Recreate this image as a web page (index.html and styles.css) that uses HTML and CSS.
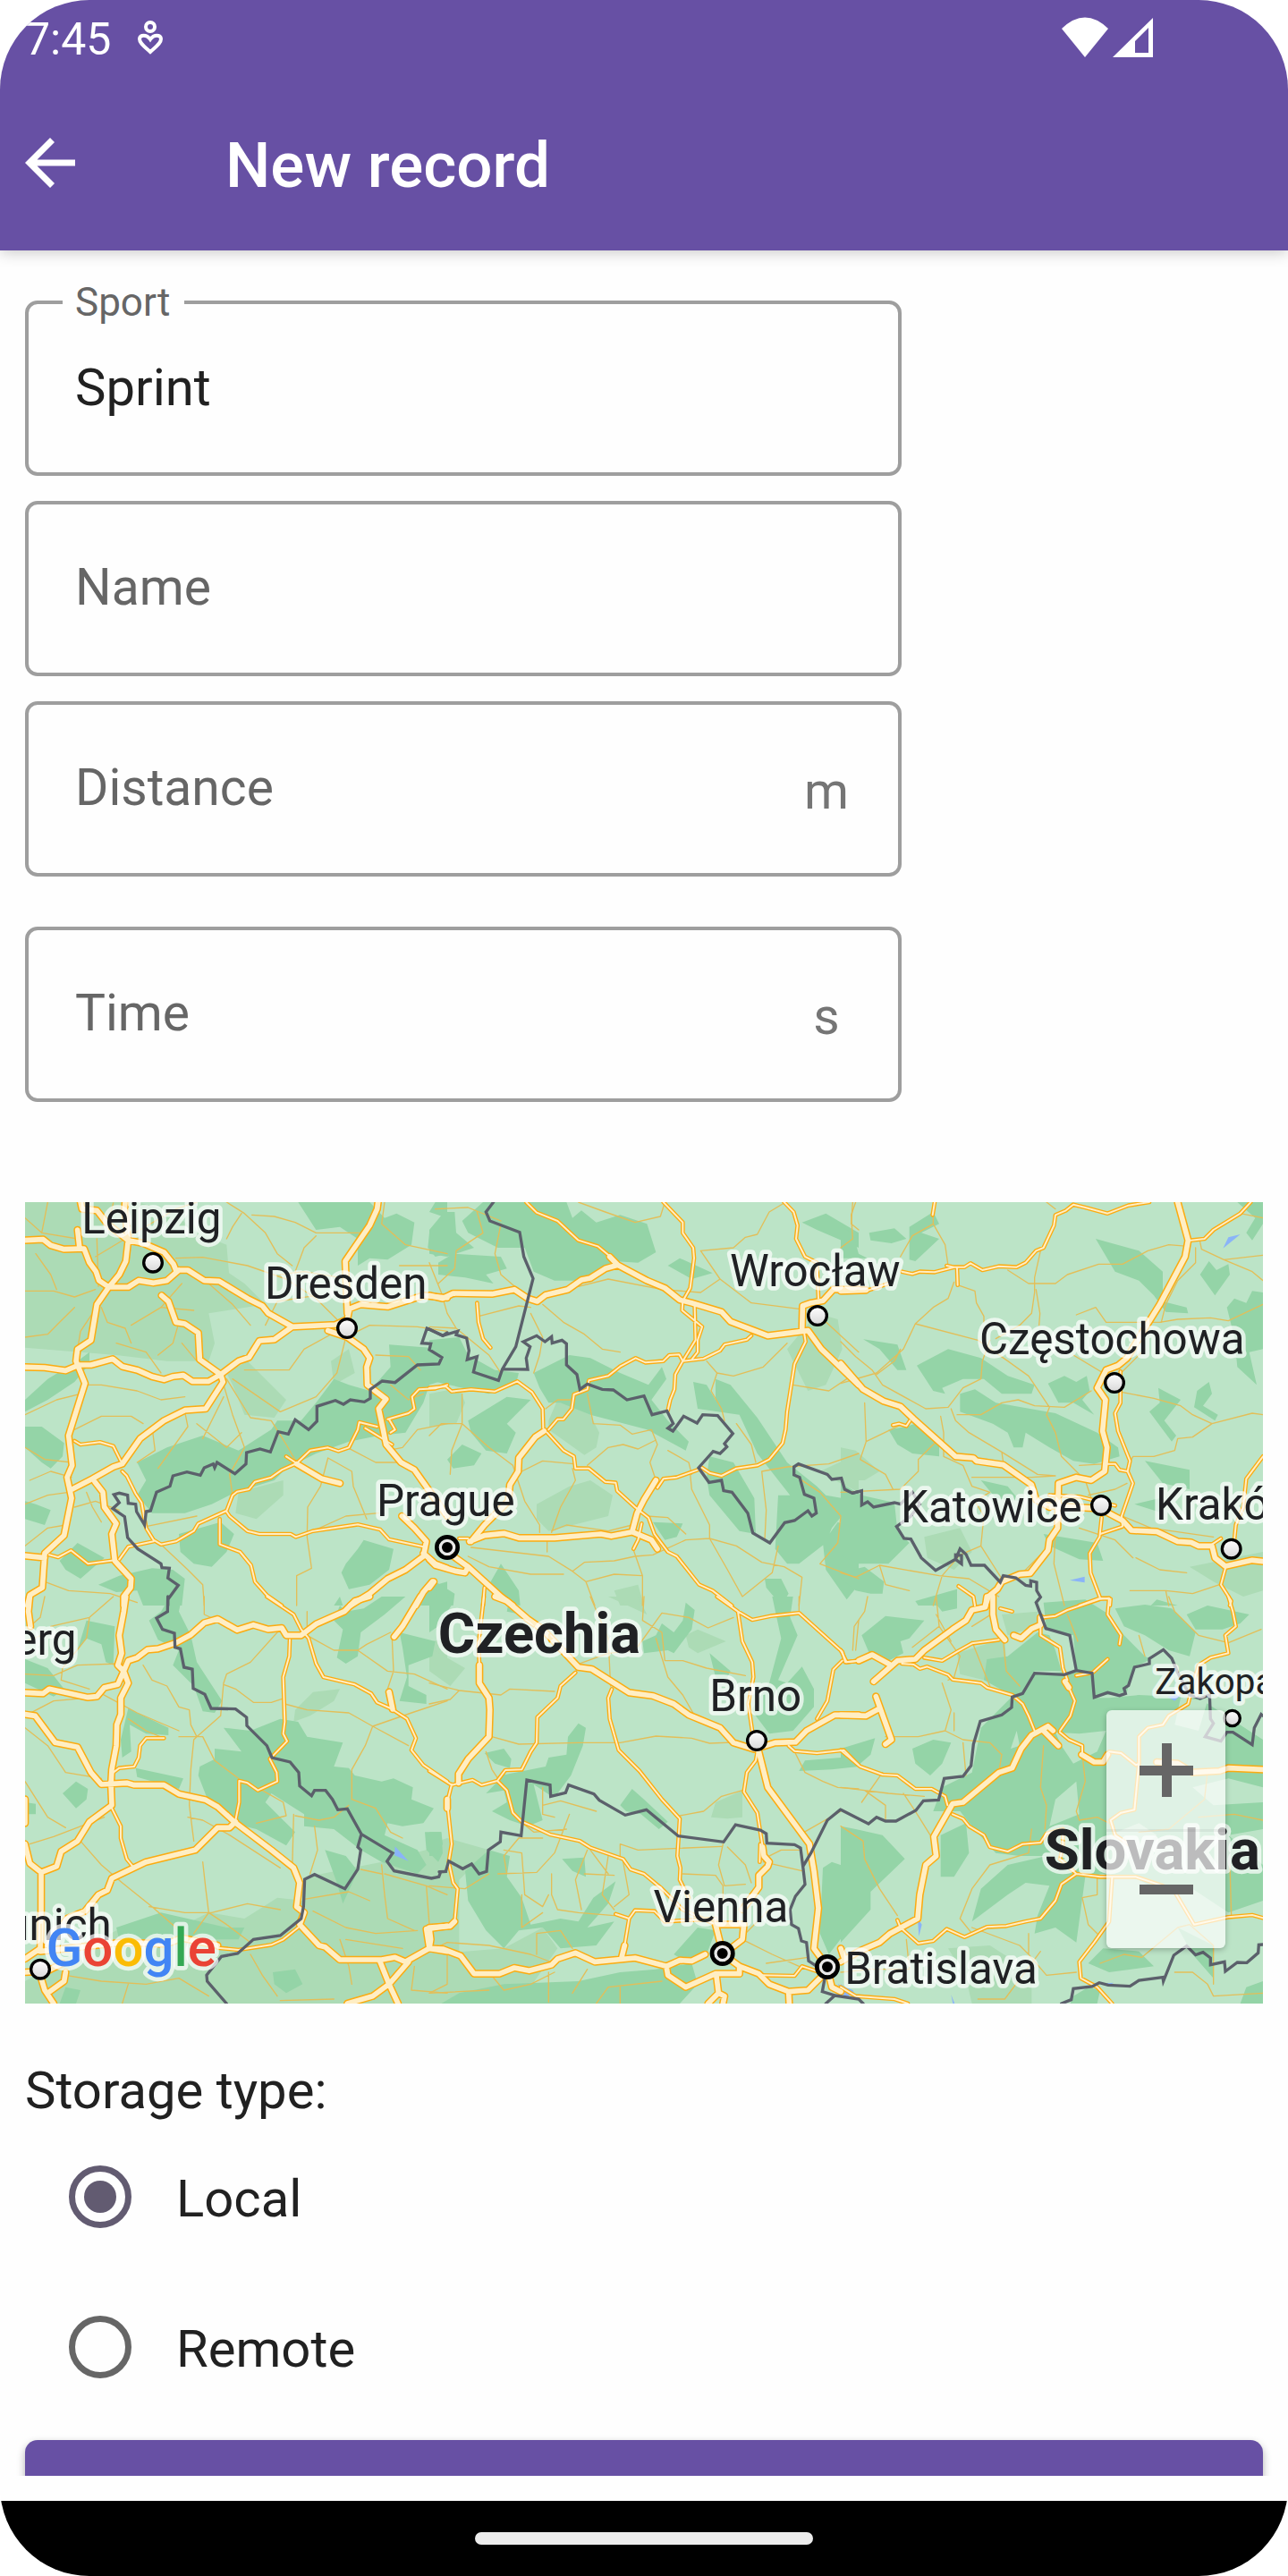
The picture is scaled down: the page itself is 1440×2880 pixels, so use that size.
FILE: index.html
```html
<!DOCTYPE html>
<html lang="en">
<head>
<meta charset="utf-8">
<meta name="viewport" content="width=device-width, initial-scale=1">
<title>New record</title>
<link rel="stylesheet" href="styles.css">
</head>
<body>
<div class="screen">
  <header class="top">
    <div class="status">
      <time class="status__time">7:45</time>
      <svg class="status__heart" viewBox="0 0 28 38" aria-hidden="true"><circle cx="14" cy="7" r="5"/><path d="M14 35C9 30 2 26 2 20.500C2 15.500 10 15 14 21C18 15 26 15.500 26 20.500C26 26 19 30 14 35Z"/></svg>
      <svg class="status__radio" viewBox="0 0 104 46" aria-hidden="true"><path d="M1 13Q27-12 53 13L27 45Z"/><path fill-rule="evenodd" d="M58 45L103 1V45ZM83 27V40H98V12Z"/></svg>
    </div>
    <div class="appbar">
      <button class="appbar__back" type="button" aria-label="Back"><svg viewBox="0 0 56 56" aria-hidden="true"><path d="M56 24.500H13.500L33 5L28 0L0 28L28 56L33 51L13.500 31.500H56Z"/></svg></button>
      <h1 class="appbar__title">New record</h1>
    </div>
  </header>

  <main class="scroll">
    <form class="form">
      <div class="fields">
        <div class="field field--filled">
          <label class="field__label" for="sport">Sport</label>
          <input class="field__input" id="sport" type="text" value="Sprint">
        </div>
        <div class="field">
          <label class="field__label" for="name">Name</label>
          <input class="field__input" id="name" type="text">
        </div>
        <div class="field">
          <label class="field__label" for="distance">Distance</label>
          <input class="field__input" id="distance" type="text">
          <span class="field__unit">m</span>
        </div>
        <div class="field field--spaced">
          <label class="field__label" for="time">Time</label>
          <input class="field__input" id="time" type="text">
          <span class="field__unit">s</span>
        </div>
      </div>

      <div class="map">
        <svg class="map__canvas" viewBox="0 0 4152 2688" role="img" aria-label="Map of Czechia">
          <defs>
            <linearGradient id="dot" x1="0" y1="0" x2="0" y2="1"><stop offset="0" stop-color="#fff"/><stop offset="1" stop-color="#d8d8d8"/></linearGradient>
            <g id="major">
              <path transform="translate(-24 -27)" d="M24 155L85 152 110 172 155 185 222 183 240 230 262 260 272 290 305 312M200 120L207 183M210 27L215 50 265 55 300 100 370 155 420 165 490 195 522 235 530 255 570 255 625 290 675 292 770 350 820 375 840 400 920 445 1065 438 1105 420 1112 385 1150 370 1240 378 1360 340 1440 348M1105 400L1098 225 1180 105 1205 50 1208 27M360 27L358 50 370 155 362 225 340 270 305 312 370 312 405 290 455 298 500 290 540 255M305 312L265 370 245 490 200 520 195 560 225 635 170 810 182 910 165 950 180 1020 155 1145 90 1205 82 1320 40 1345 32 1380M24 580L90 582 160 592 205 573 245 573 318 553 350 578 400 590 450 612 490 622 520 612 555 608 585 628 640 628 680 605M482 340L505 360 530 430 560 435 605 465 610 555 680 605 688 630 630 720 560 725 490 760 410 820 350 905 320 915 250 955 182 990M680 605L740 560 775 548 810 492 860 488 920 445M258 965L285 1000 290 1050 330 1105 315 1140 325 1230 380 1290 378 1320 355 1350 355 1380M24 1213L90 1220M1040 458L1105 480 1160 520 1180 550 1170 580 1172 640 1235 688 1210 720 1225 790 1235 840 1285 900 1330 925 1440 1080M935 905L1020 955 1080 970M1288 1080L1330 1120 1370 1165 1360 1215 1300 1260 1240 1290 1180 1340 1115 1380M1360 1205L1400 1240 1440 1255M1390 1300L1360 1335 1335 1380"/>
              <path transform="translate(1356 -27)" d="M0 340L45 350 80 333 210 335 285 320 330 350 362 360 390 338 465 320 510 288 540 282 590 250 632 238 730 290 790 315 840 355 880 365 980 395 1010 428 1135 475 1270 458M605 210L632 238M1250 455L1252 375 1280 365 1320 358 1355 320 1440 320M1270 458L1315 520 1440 640M385 795L355 815 300 885 298 930 270 975 265 1030 185 1110 140 1165M135 1165L185 1145 250 1138 300 1153 420 1153 575 1140 610 1147 680 1133 745 1160 765 1190M680 1133L697 1070 720 1025 760 960M60 1200L130 1250 240 1350 280 1380M0 1225L20 1245 90 1265 120 1270 130 1250M0 1320L15 1300"/>
              <path transform="translate(2736 -27)" d="M0 325L85 322M0 568L75 655 145 695 200 712 245 755 385 880 445 885 455 895 545 908 640 975 655 1025 700 1050M1130 27L1165 155 1155 210 1070 370 1020 450 960 550 930 575 890 590 860 650 888 690 878 795 893 850 885 930 840 960 790 950 730 970 727 1120 700 1160 695 1195 635 1272 600 1275 540 1300 525 1325 495 1350 485 1380M700 1045L870 1055 945 1095 975 1128 1060 1132 1130 1165 1175 1168 1200 1180 1245 1180 1255 1220 1290 1248 1380 1228 1416 1232"/>
              <path transform="translate(-24 1323)" d="M40 0L35 50 42 100M362 0L355 50 340 130 348 190 335 230 355 250 370 290 345 340 345 395 332 430 330 500 315 580 312 630 315 700 240 755 200 820 145 855 130 905 78 925 40 895 24 830M24 680V760M24 322L85 325 105 310 160 322 235 338 265 335 290 305 335 295 355 250 370 215 400 205 435 178 470 175 530 155 580 128 625 88 670 75 735 112 790 95 840 110 885 105 900 130 950 130 1000 92 1095 50 1130 15 1180 0M24 395L58 400 125 490 200 505 245 590 280 630 365 625 390 632 490 632 540 662 630 682 670 705 725 755 850 850 925 910 945 960 935 1040 960 1060 945 1100 1010 1170 1030 1175 1080 1218 1220 1218 1265 1210 1300 1225 1380 1180 1440 1190M730 755L710 775 670 775 595 850 430 890 315 945 300 985 270 1000 225 1055 165 1080 100 1170M78 925L78 1050 75 1180 24 1215M1262 135L1290 100 1350 0M1245 320L1257 378M1440 1105L1370 1115 1380 1180M1215 1225L1245 1300 1275 1365M1310 1225L1245 1300 1190 1340 1105 1365M75 1190L165 1180 350 1160 500 1165 550 1145 670 1170M24 1260L100 1255 150 1230M75 1270L90 1320 120 1365M160 1260L155 1290 100 1330M1440 680V710"/>
              <path transform="translate(1356 1323)" d="M220 0L260 15 330 75 380 110 500 237 545 243 670 322 750 333 820 360 870 397 975 440 1020 490 1090 512 1160 490 1228 488 1265 450 1360 397 1440 397M168 230L168 290 200 340 203 380 200 470 130 545 98 595 98 625M1105 520L1135 640 1275 830 1290 920 1305 1045 1290 1180 1330 1235M1118 840L1122 870 1140 890 1135 905 1105 935 1105 975 1050 1050M0 1110L70 1105 85 1090M0 1110L5 1150 0 1180 45 1182 105 1205 150 1265 235 1265 285 1245 335 1255 410 1235 430 1215 490 1195 555 1225 690 1212 795 1240 840 1220 880 1222 925 1200M655 1170L645 1210M795 1240L800 1270 860 1310 960 1265 1040 1265 1040 1240 985 1200 960 1100 1055 1100 1050 1150 985 1200M1040 1240L1105 1265 1140 1300 1205 1325 1270 1320 1310 1280M962 1265L970 1330 935 1365M970 1330L990 1340 985 1365M1205 1325L1207 1365M1380 1180L1390 1210M1335 1250L1350 1310 1380 1325"/>
              <path transform="translate(2736 1323)" d="M490 0L485 35 440 45 420 80 375 110 280 180 250 210 190 215 110 285M60 215L105 195 165 228M510 0L510 60 520 110 550 145M580 130L605 140 640 108 670 95 670 70M0 397L85 400 125 378M118 335L170 480 150 495M695 435L640 465 605 510 575 575 530 590 410 690 375 695 312 805 320 870 285 900 265 1000 258 1080 165 1130 130 1160 60 1190 0 1225M680 450L730 500M695 435L712 450M808 530L850 555 880 555 895 530M752 285L765 305M1060 555L1130 560 1180 590 1270 585 1300 575 1416 580"/>
            </g>
            <g id="medium">
              <path transform="translate(-24 -27)" d="M190 828L210 840 275 832 320 845 345 895M350 930L365 945 395 1005 415 1035 430 1120 455 1160 480 1175 530 1165 590 1130 605 1105 700 1062 720 1010 735 998 775 990 795 965 850 950 885 925 935 903 980 860 1040 850 1075 862 1110 850 1140 790 1145 765 1205 780M900 880L935 903M340 1225L370 1183 455 1165M105 1210L135 1218 178 1195 235 1240 325 1228M700 1065L710 1080 770 1130 810 1140 915 1140 932 1150 990 1130 1140 1108 1215 1125 1245 1158 1360 1183M677 1090L677 1175 745 1200 782 1245 795 1300 835 1345 885 1380M1240 755L1310 735 1330 720 1322 680 1345 655 1400 652 1440 640M1245 755L1265 790 1250 800M1165 785L1255 840"/>
              <path transform="translate(1356 -27)" d="M325 27L360 62 430 90 500 155 565 175 610 212M785 27L850 95 850 130 885 180 888 215 875 315 855 350M850 355L848 390 915 445 900 490 900 530 880 555M890 375L893 490 850 560M1080 475L1065 488 990 505 975 525 920 552 850 560 838 538 805 540 785 560 725 565 692 550 640 578 600 610 535 625 530 655 485 672 478 720 450 755 430 755 400 790M850 560L825 605 822 655 808 690 800 725M1190 27L1222 60 1235 105 1230 150 1260 210 1300 230 1305 350M1258 470L1262 495 1225 570 1200 730 1195 790 1185 835 1140 890 1100 910 1030 920 980 945 940 935 910 915M0 650L55 645 75 662 140 655 220 662 295 628 345 665 380 720 382 785M395 800L450 860 485 880 490 920 535 920 590 965 625 968 630 995 690 1050 735 1085 755 1140 800 1200 830 1215 905 1310 950 1330 1015 1380M765 985L785 955 830 950 900 925M712 1105L700 1160 685 1190M160 365L165 430 180 485 205 515M185 1320L180 1380M100 1155H130"/>
              <path transform="translate(2736 -27)" d="M85 325L160 300M205 260L240 268 265 260 315 262 380 245 415 245 435 232 475 255 530 242 590 245 620 230 655 190 680 180 715 105 720 70 755 55 780 35 820 45 895 65 965 38 1035 27M390 250L392 305M355 240L380 245M315 27L308 70M1175 155L1220 150 1250 120 1340 65 1375 27M938 595L938 700 920 735 930 795 970 895 962 930 980 970 942 1080M895 905L920 905 935 925 962 930M175 775L195 770 220 778 232 760M875 1085L868 1150 835 1205 838 1270 870 1355 800 1380M870 1140L945 1115 942 1080M870 1355L905 1358 903 1380M1416 880L1360 955 1350 1050 1325 1110 1320 1160M1245 1175L1275 1155M1290 1255L1275 1310 1310 1365 1305 1380M395 1315L445 1350 450 1380M700 1010L800 1015 920 1045"/>
              <path transform="translate(-24 1323)" d="M835 0L925 60 950 110 975 140 1000 225 1025 270 1130 295 1185 325 1205 355 1250 375 1305 410 1335 475 1320 515 1360 565 1440 620M912 145L910 200 890 270 895 420 890 460 903 485 845 545 868 590 870 620 805 650 770 625 742 618 742 690 730 750M490 475L430 475 410 500 405 540 390 570 340 575 320 590M315 710L345 770 345 810 365 880 385 905M670 1178L740 1185 850 1168 890 1150 940 1110"/>
              <path transform="translate(1356 1323)" d="M183 0L165 160 168 230M75 630L60 690 75 830 65 890 80 960 95 980 85 1090M0 585L75 632 145 615 175 632 228 618 260 650 280 725 310 755 345 770 405 798 505 820 540 842 650 880 675 915 720 930 780 980 850 1050 960 1100M228 618L255 582 310 580 340 520 360 490 362 405 430 340 440 300 490 255M612 310L600 340 605 410 635 515 705 585 780 680 840 745 832 870 842 910 840 950 870 1010M965 0L1035 50 1083 78 1145 65 1240 55 1385 185 1395 220 1440 215M1035 50L1050 150 1083 220 1087 270 1070 360 1083 450M1385 215L1355 245 1335 350 1300 410M1100 520L1095 550 1065 590 1055 655 1100 725 1118 840M1110 830L1108 890M1205 500L1225 518 1300 525 1390 515 1440 565M625 1065L670 1080 690 1052 755 1055 790 1090 960 1080M670 1080L655 1170M1105 1270L1225 1272 1250 1240 1310 1260"/>
              <path transform="translate(2736 1323)" d="M0 515L65 570 140 597 190 600 250 645 305 645 350 670 358 700M375 730L410 745 430 770 480 800 500 840 560 855 610 830 670 825 690 795 745 780M280 205L340 215 390 185 440 157 530 145M205 225L245 228 265 242 290 235 360 262 375 278 470 290 490 305 575 330 610 360 630 400 650 450M680 70L720 65 760 45 870 8 900 5 895 60 940 130 935 160M670 95L670 130 735 170 745 240 760 280M895 210L845 255 790 265M765 305L785 350 770 400 735 450M735 455L765 480 810 500 810 525M900 520L940 525 990 565 1000 560 1000 470 1030 440 1080 430 1100 400 1165 360 1175 320 1200 230 1240 205 1300 190 1290 130 1325 100 1315 50 1300 0M1000 560L985 715 940 725 905 750 920 800 980 840M745 780L745 840 735 880 790 930 870 940 990 940 1080 970 1120 990 1185 1100 1300 1075 1380 1068 1416 1078M910 945L900 1090 850 1160 800 1225 805 1280 860 1310 910 1365M790 930L740 965 720 1020 670 1080 620 1090 555 1105 490 1108 415 1142 355 1115 310 1155 260 1163 200 1110 190 1085M535 40L575 50M0 180L20 220 60 215M0 1310L50 1340 180 1350 225 1365"/>
            </g>
          </defs>

          <rect class="land" width="4152" height="2688"/>
          <g class="farmland">
            <path transform="translate(-24 -27)" d="M24 27H400L520 60 600 130 700 170 708 265 760 300 830 370 640 400 660 500 640 560 500 560 330 540 24 515ZM700 600L770 560 900 690 860 750 760 740 720 640ZM1050 560L1110 520 1130 600 1060 640ZM740 1000L890 960 890 1010 800 1090 730 1070Z"/>
            <path transform="translate(1356 -27)" d="M0 670L100 650 120 700 90 770 0 780ZM400 760L430 690 540 740 570 800 560 850 520 875 400 790ZM360 1040L470 980 540 960 615 1010 600 1080 520 1100 400 1130 360 1090ZM1200 520L1300 400 1370 420 1385 520 1330 640 1270 660ZM1310 930L1440 870 1440 1000 1340 950ZM620 1330L700 1310 720 1380 640 1380Z"/>
            <path transform="translate(2736 -27)" d="M0 850L50 860 130 930 80 960 0 960ZM280 1150L400 1120 440 1200 380 1260 290 1220ZM1170 1250L1416 1200 1416 1330 1350 1350 1250 1300Z"/>
            <path transform="translate(-24 1323)" d="M640 1060L760 1080 870 1010 960 1020 970 940 1220 890 1440 830 1440 1365 24 1365 24 1290 330 1120 500 1130ZM930 380L990 320 1080 310 1060 350 980 400 925 420ZM1390 150L1440 140 1440 280 1400 260Z"/>
            <path transform="translate(1356 1323)" d="M860 130L900 110 995 150 900 190 870 170ZM945 740L960 690 1050 650 1050 740 1000 745ZM0 830L60 810 200 850 100 950 100 1200 0 1200ZM0 170L120 240 70 300 0 250ZM600 0H700L730 60ZM0 1200L250 1180 380 1110 430 1180 300 1365 0 1365Z"/>
            <path transform="translate(2736 1323)" d="M390 190L550 140 560 300 480 280 400 260ZM360 1180L500 1170 640 1260 640 1365 440 1365 420 1280ZM540 60L660 50 660 100 560 130Z"/>
          </g>
          <g class="forest">
            <path transform="translate(-24 -27)" d="M940 27L1180 27 1230 80 1270 65 1330 95 1320 170 1240 220 1180 215 1140 240 1140 150 1080 110 1000 120ZM1400 27H1440V80L1380 60ZM1380 130L1440 130 1440 200 1400 210 1375 180ZM1245 505L1440 520 1440 620 1380 640 1360 700 1300 800 1210 810 1110 830 1000 870 900 920 860 960 730 1000 650 1040 560 1070 450 1070 400 1010 430 960 400 900 500 850 620 810 740 860 850 790 870 760 950 760 1000 700 1060 620 1110 640 1180 660 1250 580ZM24 690L100 620 200 560 240 530 240 570 190 630 100 690 24 730ZM24 780L80 780 155 835 150 880 110 920 80 900 24 850ZM60 1040L110 1060 90 1110 24 1090 24 1030ZM540 1140L680 1100 725 1140 700 1200 650 1250 590 1240 545 1200ZM1100 1240L1140 1190 1160 1160 1260 1190 1245 1260 1180 1310 1110 1325 1085 1270ZM140 1230L200 1170 290 1220 210 1290 160 1260ZM270 1310L340 1280 450 1255 520 1260 560 1290 550 1380 420 1380 400 1330 330 1335ZM1060 1380L1080 1350 1090 1380ZM1370 1320L1440 1300 1440 1380 1350 1380Z"/>
            <path transform="translate(1356 -27)" d="M0 120L50 60 85 60 90 130 150 180 60 210 0 200ZM30 230L80 200 240 210 260 250 190 270 215 300 120 280 30 270ZM110 90L180 27 460 27 480 80 510 55 560 95 640 70 730 100 760 195 700 230 620 225 500 290 420 290 350 260 320 180 230 180 130 130ZM800 240L840 215 950 265 880 285ZM0 490L100 480 130 540 220 590 300 600 290 640 200 670 0 625ZM350 600L470 540 540 550 640 600 735 640 780 580 795 620 745 690 800 760 870 830 860 860 730 790 540 740 440 700 400 700 370 650ZM130 760L260 680 340 690 300 730 260 770 290 800 260 870 190 860 140 800ZM60 890L110 840 175 870 150 910 80 920ZM750 1100L850 1105 830 1150 790 1160ZM885 630L930 640 960 690 960 620 1010 640 1100 750 1200 900 1300 980 1330 1010 1440 1030 1400 1060 1350 1120 1330 1170 1240 1240 1200 1240 1160 1190 1170 1010 1210 1010 1100 870 1040 740 900 720ZM940 880L1020 900 1090 1020 1095 1140 1040 1130 940 1010 930 950ZM1125 1290L1180 1290 1205 1340 1180 1380 1130 1320ZM1250 95L1330 65 1440 130 1440 180 1300 120ZM1320 1170L1370 1100 1440 1130 1440 1310 1400 1360 1330 1260ZM20 1300L85 1340 80 1380 30 1380ZM200 1310L240 1240 300 1330 305 1380 250 1370Z"/>
            <path transform="translate(2736 -27)" d="M0 110L40 130 60 200 90 215 0 215ZM95 130L180 115 220 150 170 165 100 155ZM230 110L310 60 330 100 270 130 330 150 250 225 230 220ZM855 150L1000 190 1080 260 1080 360 1160 380 1165 400 1090 395 1050 340 1000 290 920 260ZM1205 270L1235 225 1260 255 1300 235 1305 270 1255 340ZM1330 27L1416 27 1416 100 1380 155 1360 130 1390 80ZM1295 380L1320 350 1360 365 1380 325 1416 330 1416 520 1370 530 1395 640 1330 580 1320 480ZM75 487L190 505 220 590 190 590 130 520ZM255 575L360 520 470 550 560 610 650 640 640 670 540 670 480 620 410 620 340 650 350 670 310 660ZM400 670L450 655 520 700 580 710 720 735 860 800 930 850 935 880 850 905 780 895 700 850 620 800 610 850 580 850 560 800 510 770 400 730ZM695 635L750 610 790 630 825 610 835 660 810 690 850 740 780 700 730 700ZM1065 650L1140 690 1085 760 1125 810 1110 830 1035 730 1070 700ZM1195 660L1235 630 1245 670 1215 710 1265 740 1255 760 1185 715ZM160 790L220 780 250 770 330 840 330 880 240 870 190 840ZM0 970L70 1010 180 1035 190 1130 230 1170 160 1240 60 1240 0 1210ZM1020 895L1170 925 1170 990 1080 970ZM680 1140L860 1170 880 1230 800 1225 700 1180ZM470 960L560 980 600 1030 520 1020ZM985 1040L1070 1020 1080 1070ZM0 1290L40 1260 80 1250 145 1300 140 1340 100 1340 50 1330ZM250 1365L390 1325 390 1380 260 1380ZM1040 1380L1060 1360 1130 1380Z"/>
            <path transform="translate(-24 1323)" d="M510 0L550 0 540 50 580 130 600 220 685 350 660 390 620 385 590 300 520 230 540 180 470 145 440 80 480 50ZM230 80L325 100 320 230 295 220 280 160 230 140 200 180ZM24 210L100 240 155 310 120 335 24 290ZM370 375L505 440 505 465 430 460 375 430 380 520 350 540 345 480ZM395 575L555 610 540 645 400 605ZM150 660L195 620 235 645 230 680 195 710ZM24 690L60 695 60 730 24 730ZM690 440L780 450 880 410 940 420 970 470 1090 490 1060 570 1110 575 1130 600 1220 620 1260 610 1325 640 1320 680 1395 710 1360 760 1290 770 1240 760 1230 800 1340 850 1370 900 1340 930 1220 890 1150 850 1060 780 960 770 960 730 850 660 830 690 930 790 900 835 800 780 760 770 640 690 605 600 610 570 660 545 660 510 750 520ZM1080 30L1100 50 1160 40 1220 0 1300 0 1230 60 1150 120 1140 200 1100 225 1070 205 1090 110 1060 80ZM1290 170L1280 120 1400 150 1390 200 1310 230 1310 300 1370 330 1370 360 1280 350 1305 270ZM1030 850L1100 870 1140 920 1090 1030 1070 960ZM1365 790L1420 790 1425 860 1410 890 1370 850ZM330 1110L480 1060 700 1110 760 1110 740 1150 340 1150ZM855 1260L930 1250 955 1300 900 1330 860 1300ZM140 1365L160 1310 210 1320 195 1365Z"/>
            <path transform="translate(1356 1323)" d="M0 0L60 0 80 20 30 100 0 120ZM270 0L310 60 260 50ZM715 150L760 130 780 90 820 120 850 80 860 20 890 45 880 110 820 190 800 180 720 190ZM940 190L1010 250 990 290 960 270ZM1150 0L1220 0 1210 70 1235 130 1170 280 1200 290 1250 235 1290 310 1290 370 1220 450 1140 460 1080 380 1140 290 1180 140ZM465 470L500 425 525 440 515 500 475 600 430 660 410 670 350 630 380 750 330 770 270 750 210 720 260 690 250 650 190 660 240 610 240 600 390 570 400 540 460 530ZM185 525L250 510 275 545 270 575 220 560ZM640 700L680 645 720 680 800 755 770 780 710 730 660 720ZM1240 585L1260 550 1380 540 1440 510 1440 570 1350 580ZM445 880L520 875 525 940 480 920ZM0 790L40 790 45 830 20 870 0 870ZM120 920L200 850 270 870 260 940 310 1010 340 1100 440 1080 500 1090 550 1010 625 955 600 1030 530 1110 620 1090 560 1170 440 1180 380 1110 300 1120 250 1180 190 1120 130 1020ZM100 1330L250 1300 500 1290 640 1260 760 1250 880 1230 900 1300 840 1365 40 1365ZM820 1200L900 1110 960 1120 930 1200 870 1230ZM1320 910L1350 890 1440 920 1440 1070 1340 1200 1310 1130Z"/>
            <path transform="translate(2736 1323)" d="M70 130L150 65 280 80 230 140 200 150 210 190 160 215 100 200ZM300 0L390 0 390 40 340 50ZM560 200L660 120 700 130 720 180 740 250 650 250 600 330 570 330 480 280 490 210ZM570 340L650 260 790 250 840 260 850 340 900 340 1000 330 1200 340 1416 480 1416 780 1300 800 1416 900 1416 1020 1300 1060 1180 980 1090 1000 1000 950 880 930 820 940 790 1160 720 1110 650 1130 660 1070 700 970 620 960 560 1000 440 1090 470 980 560 900 690 870 600 870 520 860 440 770 400 720 310 720 340 640 440 590 470 440ZM790 250L780 130 690 110 680 20 820 10 900 60 950 130 1020 200 1040 210 980 240 960 320 850 335 845 255ZM920 40L1020 27 1110 40 1190 120 1170 200 1100 180 1020 130 950 100ZM1160 60L1230 30 1370 60 1340 90 1280 110 1190 110ZM240 510L310 480 370 490 340 560 300 600 250 560ZM0 510L115 475 100 530 60 565 0 560ZM0 770L50 780 140 800 215 880 100 990 100 1050 0 1160ZM335 800L420 760 430 860 380 940 335 940ZM830 1230L880 1180 1000 1190 1050 1240 900 1260ZM1130 1110L1250 1170 1250 1280 1180 1200ZM830 1310L870 1320 860 1365 770 1365 780 1340ZM1340 1365L1360 1310 1416 1290 1416 1365Z"/>
          </g>
          <path class="land" transform="translate(2736 1323)" d="M720 455L800 460 890 450 860 520 780 560 740 500ZM720 680L790 620 800 730 700 770ZM1140 340L1230 350 1200 450 1120 430ZM1180 640L1300 610 1416 640 1416 690 1250 700ZM590 450L600 500 570 510ZM900 800L1000 760 1060 800 960 880Z"/>
          <g class="water">
            <path transform="translate(2736 -27)" d="M1282 182L1300 145 1340 135ZM768 1295L818 1283 818 1303Z"/>
            <path transform="translate(-24 1323)" d="M1265 838L1310 887 1263 868Z"/>
            <path transform="translate(1356 1323)" d="M1370 1300L1420 1320 1430 1340 1390 1335Z"/>
            <path transform="translate(2736 1323)" d="M258 1080L272 1100 262 1140ZM1095 335L1140 330 1120 350ZM870 1298L915 1295 900 1305ZM0 1300L40 1330 20 1345 0 1330ZM370 1335L382 1365 376 1365Z"/>
          </g>
          <g class="minor">
            <path transform="translate(-24 -27)" d="M24 80L80 130 200 150M100 27L80 130M265 150L270 310M24 325L120 325 190 345 260 320M320 30L300 110M530 215L620 212 770 240 900 285 1000 350 1070 420M600 27L530 50 410 120 260 210M700 27L760 65 830 130 870 200 920 240M750 65L720 110 700 150M785 70L860 75 930 95 1000 130 1170 130M1000 140L960 180 930 260M280 380L300 430 360 450 380 500M380 440L480 380 590 390M480 380L550 300M640 300L720 370 780 440M24 480L100 470 140 430 190 380M24 740L130 690 210 670M215 640L280 640 400 660 480 690 560 680M170 800L280 745 380 745 420 770M560 730L570 780 470 920M690 640L720 740 760 850M690 680L620 820M700 620L780 750 850 760 900 840 935 900M720 620L880 730 1000 680 1070 600 1100 480M760 590L910 590 960 520 1060 465M24 850L90 890 180 900M24 1040L100 1010 170 1000M190 1050L260 1030 340 1060M24 1180L100 1120 160 1110M90 1300L170 1330 310 1340 400 1370M430 1115L600 1080M480 1175L570 1260 620 1310 625 1380M935 1380L935 1280 985 1255 970 1150 972 1050 1015 980 1040 885 1120 930 1125 980 1170 1090M1105 850L1200 900 1290 900M1120 470L1180 440 1340 445 1440 460M1440 770L1340 790 1290 850 1240 860M990 1130L1100 1080 1210 1070M1230 27L1220 100 1300 170 1440 200M1280 240H1440M720 1010L710 940 760 850M470 540L520 500 540 430M60 200L110 270 130 320M250 400L210 460 200 520M330 500L430 530 480 600M550 500L600 560M830 440L870 360 1000 340M880 270L960 260 1080 280M230 1000L250 1050 280 1100M40 960L110 930 180 950M1200 540L1310 545 1350 590M1250 640L1310 690 1360 670M600 770L700 850 750 800M450 780L460 860 400 900"/>
            <path transform="translate(1356 -27)" d="M20 50L130 45 240 90M160 60L180 130 90 190 85 250 30 300M240 100L220 200 240 270 310 330M500 27L590 60 690 95 775 75 790 27M0 230L40 330 60 400 90 450M165 410L300 375 340 380M340 400L380 480 370 540 350 600M380 370L450 430 520 470 580 520 640 530M500 310L600 285 780 320 910 330 975 285 910 190 1020 180 1060 145 1100 135 1140 60 1190 30M975 285L1080 365 1240 385M930 560L965 600 1020 610 1120 580 1200 500M965 600L945 660 980 720 990 760M530 670L550 770 640 775 680 805 745 790 765 840 740 900 760 960M530 910L600 850 650 840 700 855 760 825M110 670L110 770 40 770 0 810M110 770L75 860 70 940M110 770L200 850 280 910 320 1030 370 1110 370 1135M310 930L380 895 485 905M480 920L490 960 440 1050 410 1135M410 1130L460 1110 600 1130 680 1110M140 1185L400 1215 480 1265 520 1235 620 1230 690 1215 750 1210 860 1160 940 1155 1030 1180 1115 1235 1190 1250 1250 1285 1240 1380M130 1215L200 1250 340 1275 450 1275M480 1265L525 1300 555 1380M525 1300L620 1275 715 1280 715 1380M685 1195L715 1280M730 1080L800 1085 860 1140M875 940L880 990 940 1110 940 1155 1000 1260 1050 1350 1150 1270 1170 1180M1125 1160L1130 1060 1115 930 1200 915 1340 905 1440 870M1030 770L1080 840 1095 900M1220 640L1340 660 1400 620M1310 410L1440 530M1220 940L1310 1000 1380 1080 1370 1170 1310 1240 1440 1290M800 860L870 900 880 940M1420 27L1415 100 1440 120M395 1200V1165M390 720L430 690 480 690M0 445L90 450 200 540 240 600"/>
            <path transform="translate(2736 -27)" d="M50 27L35 70 40 150 0 180M310 70L310 100 350 170 360 240M310 100L240 140 200 210M392 305L450 325 455 365 480 410 480 430M380 295L360 350 310 380 250 435 210 520 120 600 0 635M250 435L460 490 560 560 630 610 700 715 690 740M0 495L50 545 105 590 140 640 285 720M120 605L180 560 200 520M285 720L360 715 410 650 470 620 475 560 500 490M560 255L630 300 720 300 760 270 865 235 945 235 1030 190 1100 170 1165 175M670 190L650 280 650 330 640 400 600 440 520 485M655 320L668 400 665 440M790 405L855 380 890 430 1070 430 1130 420 1240 415 1300 425 1416 370M690 27L720 50M1205 160L1210 185 1285 220 1416 205M1285 220L1380 260 1416 290M1190 180L1190 230 1130 290 1090 370 1075 430M945 665L1050 685 1140 710 1180 740 1245 770 1380 735 1416 740M1245 770L1180 815 1130 820 1120 860 1050 880 980 880 970 900M390 740L470 740 540 700 595 690 650 710 750 715 840 660M690 740L720 800 740 880 820 960 840 1020M370 720L385 760 430 800 540 865 660 940 720 945M540 865L545 900M335 745L345 800 345 880 410 910 440 980 500 1000M330 820L260 890 260 930 200 990 0 1000M80 700L85 830 210 770M85 830L65 890 150 940 175 990M440 950L640 950 720 945M500 1000L450 1030 480 1080 470 1180 540 1290M470 1180L400 1210 340 1280M0 1270L50 1285 130 1245 330 1280 430 1290 530 1350M340 1280L310 1380M130 1245L150 1310 230 1330M720 1130L715 1240 750 1380M800 910L890 905M800 1120L920 1160 980 1220M990 1220L1070 1260 1160 1270M970 1330L1090 1330 1180 1340 1270 1310M1090 1330L1100 1380M945 1080L1040 1120 1250 1150M830 1010L920 990 960 970M700 1180L600 1280M1340 65L1416 80M780 540L880 600M940 600L1020 520"/>
            <path transform="translate(-24 1323)" d="M90 0L75 70 40 100M110 100L240 70 320 0M240 70L230 140 150 240 145 280 240 310M24 260L120 265 200 230 340 225M24 400L120 350 230 340M420 230L450 280 500 300 540 370 575 380 580 430 600 470 590 480 580 580 575 700 590 820M270 320L400 390 540 450M600 470L680 400 690 290 700 260 780 220 870 120 895 110M690 295L730 310 790 355 850 355 895 340M895 360L970 380 1110 390 1190 435 1310 500M1190 435L1165 500 1120 580 1120 680M1190 435L1320 390 1440 350M625 0L625 60 700 95M540 470L620 470 660 550 740 610M24 440L100 500 160 590 280 610M24 620L100 740 160 775M40 830L120 805 290 740M210 820L280 900 350 960 450 1040 530 1110M620 890L630 980 640 1060 590 1130M440 1040L560 1060 650 1060 770 1030 880 1050M640 1060L700 1100 780 1160M570 740L620 750 710 800 880 910M820 650L890 690 900 735 800 760M925 730L920 920M930 735L1010 750 1060 740 1110 700M995 770L1005 850 980 930M1120 680L1200 710 1250 790 1290 810M960 1015L1110 990 1180 1020M990 1055L1100 1110 1200 1130 1340 1120M1220 900L1230 1000 1240 1080 1330 1120M1230 930L1370 970 1440 1000M1370 970L1380 1100M970 50V100M970 130L1060 180 1140 180 1170 160 1250 120M1140 180L1240 250 1330 260 1440 310M1255 140L1260 250 1240 310M780 1200L820 1270 870 1340M880 1355L1060 1350M1080 1150L1110 1240 1120 1300M160 1270L280 1290 430 1300 540 1280 640 1340M370 1300L350 1365M370 410L430 450 490 475M24 150L80 130M1150 915L1220 930M1100 1150L1290 1180M1330 1240L1320 1320 1440 1330"/>
            <path transform="translate(1356 1323)" d="M0 290L100 315 240 330 270 310 420 318M0 360L70 345 100 315M210 470L300 495 500 490 640 490 760 468 880 475 940 492 1050 488M190 520L210 580 230 610M540 0L600 140 608 300M490 230L600 190 690 180 780 55 870 70 935 105 1020 70M790 215L850 215 930 240 1060 265M760 140L800 270 850 330 890 400M720 0L715 80 780 120 790 215M1240 0V60M1220 510L1260 590 1320 620 1370 640 1440 645M840 735L920 720 980 670 1050 650M640 870L640 830 700 850 980 838M985 830L970 900 990 970 1060 965M1000 840L1060 900 1080 960M1120 880L1180 850 1240 850M1120 890L1250 920M230 930L360 925 420 860 470 730M250 850L310 860 320 1000 380 1040 400 1000M260 930L250 870 300 810 380 810M380 640L380 730 420 740M310 1000L310 1110 380 1060M410 930L410 1000 430 1050 500 1060 620 1070M530 850L490 950 510 1050M600 870L580 1000 620 1050M650 890L670 1000 620 1040M850 930L960 935 985 970 985 1020M360 1200L360 1130 440 1120 480 1180M0 970L120 980 200 930M0 1190L60 1160 200 1170 340 1200 420 1230M60 1200L60 1300 0 1330 200 1320M200 1260L250 1320 340 1300 420 1260M400 1260V1360M480 1330L530 1250M560 1365L600 1310 780 1290M1050 1150L1150 1200 1240 1240M1130 1230L1270 1210M1140 1050L1060 1130M640 1310V1365M1240 800L1380 720M1440 80L1430 180M300 750L350 790 460 780M380 700L440 685 560 720M520 930L620 935M540 850L600 930"/>
            <path transform="translate(2736 1323)" d="M90 0L80 50 45 100 40 180M320 0L330 100 400 200 380 270 360 280M320 60L370 150M440 150L500 300M545 150L555 250 600 300M340 290L370 380 350 450 260 470 150 470M350 450L410 480 500 490 540 530 530 590M380 390V450M410 490L420 600M0 640L80 650 160 660 280 670M70 690L140 590M80 650L150 700 150 750M210 660L250 720 300 800M0 770L75 820 80 880 130 980 190 1070M640 780L630 860 500 900 440 980 400 1080 440 1130M760 60L780 110 795 150M680 500L670 640 690 700 685 780M810 530L820 620 790 720 800 750 860 740 900 760M860 940L860 1000 810 1010 830 1100 870 1140M1100 0L1120 50 1200 130 1300 155 1410 110M1000 130L1020 200M1230 590L1220 680 1100 780 1000 790M1200 740L1320 730 1416 750M1310 1070L1305 900M220 1150L230 1250 100 1250 0 1260M440 1110L600 1170 630 1200 630 1130M630 1200L690 1270 790 1260M670 1190L550 1350 460 1350M870 1230L950 1200 1010 1210 1130 1110 1170 1100M1120 1260L1180 1260 1230 1300 1250 1340 1416 1330M1170 1100L1250 1170 1250 1300M330 100L240 170M440 100L520 50"/>
          </g>
          <use class="medium-casing" href="#medium"/>
          <use class="major-casing" href="#major"/>
          <use class="medium-fill" href="#medium"/>
          <use class="major-fill" href="#major"/>
          <g class="border">
            <path transform="translate(-24 -27)" d="M1440 465L1425 475 1372 450 1355 500 1385 502 1380 522 1422 548 1412 570 1340 573 1265 632 1222 627 1182 655 1182 685 1162 697 1115 690 1092 705 1065 692 1003 712 1003 762 975 790 930 757 907 805 873 797 847 865 812 855 767 867 765 905 728 938 668 900 660 918 655 905 625 918 612 943 567 932 520 945 510 980 465 1000 445 1062 430 1065 425 1110 398 1065 395 1040 370 1037 368 1010 340 1003 322 1008 340 1035 318 1055 358 1082 368 1152 402 1190 480 1240 483 1253 508 1255 503 1288 538 1312 503 1360 503 1380"/>
            <path transform="translate(1356 -27)" d="M0 453L45 475 95 460 90 472 125 483 133 525 127 555 160 545 148 597 232 625 245 587 290 512 348 283 317 210 303 128 203 90 190 60 215 27M245 587L330 588 325 550 338 512 315 495 360 475 388 495 410 478 412 500 445 490 460 502 460 573 495 605 505 655 530 637 580 655 617 657 663 690 720 677 747 740 797 727 818 770 800 785 817 795 853 745 898 768 917 740 967 743 1018 803 990 837 998 848 975 870 952 863 903 918 938 967 980 960 987 995 1015 1000 1068 1070 1085 1137 1142 1170 1192 1102 1225 1095 1270 1062 1283 1080 1298 1070 1290 1020 1258 1007 1242 950 1223 942 1223 915 1238 905 1335 940 1350 957 1382 953 1393 990 1418 1003 1440 998"/>
            <path transform="translate(2736 -27)" d="M40 1003L70 995 70 1043 90 1032 110 1050 180 1035 200 1040 240 1000 265 1040 235 1080 187 1115 212 1155 235 1157 270 1220 318 1262 385 1225 385 1210 405 1212 405 1240 385 1225 400 1190 420 1208 437 1245 482 1245 535 1302 545 1280 587 1287 620 1312 637 1315 637 1297 657 1302 657 1330 670 1352 655 1370 688 1457"/>
            <path transform="translate(-24 1323)" d="M503 0L502 50 465 72 485 110 525 123 527 170 545 175 557 237 585 243 588 308 627 328 648 375 730 377 767 405 768 433 835 500 852 540 913 555 942 590 945 635 985 668 995 650 1032 650 1055 680 1073 715 1105 712 1152 797 1257 860 1238 888 1262 920 1387 945 1412 940 1418 923 1435 922M1152 797L1140 840 1150 850 1140 915 1097 980 995 932 962 948 958 1040 950 1080 880 1137 790 1150 737 1197 683 1207 633 1270 635 1290 700 1365"/>
            <path transform="translate(1356 1323)" d="M33 923L55 922 65 887 112 913 142 897 167 930 192 922 198 850 238 822 240 790 308 802 327 615 405 632 407 670 457 658 467 632 552 662 570 683 657 733 728 715 835 803 987 823 1027 765 1110 783 1130 795 1132 827 1225 832 1245 843 1253 905 1280 860 1335 750 1378 715M1253 905L1260 965 1228 1005 1210 1050 1215 1100 1238 1113 1248 1155 1265 1160 1272 1222 1330 1260 1318 1325 1360 1338 1330 1365M1360 1338L1440 1350 1455 1365"/>
            <path transform="translate(2736 1323)" d="M688 107L768 130 790 248 750 262 650 257 610 325 575 337 573 372 540 397 468 418 445 495 437 567 410 603 347 610 328 682 277 685 252 717 185 753 150 753 120 740 93 762 0 715M790 248L843 257 850 338 895 322 935 332 955 325 950 308 965 298 985 237 1035 225 1035 208 1082 178 1110 207 1130 255 1170 330 1205 342 1237 330 1240 410 1250 425 1222 470 1275 485 1295 455 1315 455 1380 497 1387 440 1410 395 1416 400M740 1365L773 1352 780 1315 843 1308 867 1295 897 1303 970 1307 1000 1287 1080 1277 1082 1290 1117 1203 1160 1172 1190 1202 1215 1193 1240 1212 1240 1235 1287 1225 1290 1257 1330 1227 1362 1228 1400 1195 1402 1168 1416 1167"/>
          </g>
          <g class="town">
            <circle cx="429" cy="203" r="31"/><circle cx="1080" cy="423" r="31"/><circle cx="2658" cy="381" r="31"/><circle cx="3654" cy="606" r="31"/><circle cx="3609" cy="1017" r="31"/><circle cx="4046" cy="1163" r="31"/><circle cx="4049" cy="1731" r="26"/><circle cx="2454" cy="1806" r="31"/><circle cx="51" cy="2573" r="31"/>
          </g>
          <g class="capital">
            <circle cx="1416" cy="1158" r="23"/><circle cx="2339" cy="2520" r="23"/><circle cx="2691" cy="2565" r="23"/>
          </g>
          <g class="capital-ring">
            <circle cx="1416" cy="1158" r="35"/><circle cx="2339" cy="2520" r="35"/><circle cx="2691" cy="2565" r="35"/>
          </g>
          <g class="place">
            <text x="424" y="106">Leipzig</text>
            <text x="1076" y="324">Dresden</text>
            <text x="1411" y="1054">Prague</text>
            <text x="2650" y="282">Wrocław</text>
            <text x="3646" y="509">Częstochowa</text>
            <text x="3241" y="1074">Katowice</text>
            <text x="3792" y="1066" class="place--start">Kraków</text>
            <text x="3790" y="1650" class="place--start place--small">Zakopane</text>
            <text x="172" y="1519" class="place--end">Nuremberg</text>
            <text x="290" y="2476" class="place--end">Munich</text>
            <text x="2450" y="1708">Brno</text>
            <text x="2334" y="2415">Vienna</text>
            <text x="3072" y="2621">Bratislava</text>
            <text x="1725" y="1511" class="place--country">Czechia</text>
            <text x="3781" y="2239" class="place--country">Slovakia</text>
          </g>
          <text class="google" x="356" y="2561"><tspan class="google__blue">G</tspan><tspan class="google__red">o</tspan><tspan class="google__yellow">o</tspan><tspan class="google__blue">g</tspan><tspan class="google__green">l</tspan><tspan class="google__red">e</tspan></text>
        </svg>
        <div class="zoom">
          <button class="zoom__button" type="button" aria-label="Zoom in"><svg viewBox="0 0 60 60" aria-hidden="true"><path d="M25 0H36V25H60V36H36V60H25V36H0V25H25Z"/></svg></button>
          <button class="zoom__button" type="button" aria-label="Zoom out"><svg viewBox="0 0 60 60" aria-hidden="true"><path d="M0 24H60V35H0Z"/></svg></button>
        </div>
      </div>

      <fieldset class="storage">
        <legend class="storage__title">Storage type:</legend>
        <label class="option"><input class="option__radio" type="radio" name="storage" value="local" checked><span class="option__text">Local</span></label>
        <label class="option"><input class="option__radio" type="radio" name="storage" value="remote"><span class="option__text">Remote</span></label>
      </fieldset>

      <button class="save" type="submit" aria-label="Save"></button>
    </form>
  </main>

  <footer class="gesture"><span class="gesture__bar"></span></footer>
</div>
</body>
</html>
```
FILE: styles.css
```css
* {
  box-sizing: border-box;
}

html {
  background: #fff;
}

body {
  margin: 0;
  font-family: Roboto, "Liberation Sans", sans-serif;
  font-size: 58px;
  color: #212121;
}

button,
input {
  font: inherit;
  color: inherit;
}

.screen {
  display: flex;
  flex-direction: column;
  height: 100vh;
  overflow: hidden;
  border-radius: 100px;
  background: #fefefe;
}

/* Status bar and app bar */
.top {
  position: relative;
  z-index: 1;
  flex: none;
  background: #6750a4;
  color: #fff;
  box-shadow: 0 2px 16px rgba(0, 0, 0, .22);
}

.top svg {
  display: block;
  fill: currentColor;
}

.status {
  display: flex;
  align-items: center;
  height: 84px;
  padding: 0 150px 0 28px;
}

.status__time {
  padding-top: 4px;
  font-size: 50px;
  line-height: 80px;
}

.top .status__heart {
  width: 28px;
  height: 38px;
  margin-left: 30px;
  fill: none;
  stroke: currentColor;
  stroke-width: 4;
}

.status__radio {
  width: 104px;
  height: 46px;
  margin-left: auto;
}

.appbar {
  display: flex;
  align-items: center;
  height: 196px;
  padding: 0 28px 0 0;
  gap: 140px;
}

.appbar__back {
  display: grid;
  place-items: center;
  width: 112px;
  height: 112px;
  padding: 0;
  border: 0;
  background: none;
}

.appbar__back svg {
  width: 56px;
  height: 56px;
}

.appbar__title {
  margin: 0;
  padding-top: 6px;
  font-size: 71px;
  font-weight: 500;
  line-height: 84px;
}

/* Scrolling form */
.scroll {
  flex: 1;
  min-height: 0;
  margin-bottom: 28px;
  overflow: hidden auto;
  scrollbar-width: none;
}

.form {
  display: flex;
  flex-direction: column;
  padding: 56px 28px;
}

.fields {
  display: flex;
  flex-direction: column;
  gap: 28px;
  max-width: 980px;
}

.field {
  position: relative;
  display: grid;
  align-items: center;
  height: 196px;
}

.field--spaced {
  margin-top: 28px;
}

.field__input,
.field__label,
.field__unit {
  grid-area: 1 / 1;
}

.field__input {
  width: 100%;
  height: 100%;
  padding: 0 140px 2px 52px;
  border: 4px solid #9e9e9e;
  border-radius: 14px;
  background: none;
  outline: none;
}

.field__label {
  padding: 0 0 4px 56px;
  font-size: 57px;
  color: #666;
  pointer-events: none;
}

.field--filled .field__label {
  position: absolute;
  top: -24px;
  left: 42px;
  padding: 0 16px 0 14px;
  background: #fefefe;
  font-size: 44px;
  line-height: 52px;
}

.field__unit {
  justify-self: end;
  width: 112px;
  margin-right: 28px;
  padding-top: 4px;
  font-size: 57px;
  text-align: center;
  color: #757575;
}

/* Map */
.map {
  position: relative;
  margin-top: 112px;
}

.map__canvas {
  display: block;
  width: 100%;
  height: auto;
  overflow: hidden;
}

.land {
  fill: #bce4c7;
}

.farmland {
  fill: #acdbb5;
}

.forest {
  fill: #94d4a7;
}

.water {
  fill: #8ab4f8;
}

.minor,
.border,
.medium-casing,
.medium-fill,
.major-casing,
.major-fill {
  fill: none;
  stroke-linejoin: round;
  stroke-linecap: round;
}

.minor {
  stroke: #e3be58;
  stroke-width: 4;
}

.medium-casing {
  stroke: #fcab10;
  stroke-width: 14;
}

.medium-fill {
  stroke: #ffeec4;
  stroke-width: 6;
}

.major-casing {
  stroke: #fcab10;
  stroke-width: 26;
}

.major-fill {
  stroke: #ffeec4;
  stroke-width: 17;
}

.border {
  stroke: #5b606b;
  stroke-width: 10;
  stroke-linejoin: miter;
}

.town {
  fill: url(#dot);
  stroke: #000;
  stroke-width: 10;
}

.capital {
  fill: #000;
  stroke: #e8e8e8;
  stroke-width: 10;
}

.capital-ring {
  fill: none;
  stroke: #000;
  stroke-width: 14;
}

.place,
.google {
  stroke: rgba(255, 255, 255, .7);
  stroke-width: 28;
  stroke-linejoin: round;
  paint-order: stroke;
  text-anchor: middle;
}

.place {
  font-size: 148px;
  fill: #202124;
}

.place--start {
  text-anchor: start;
}

.place--end {
  text-anchor: end;
}

.place--small {
  font-size: 121px;
}

.place--country {
  font-size: 190px;
  font-weight: 700;
}

.google {
  font-size: 180px;
  font-weight: 500;
}

.google__blue {
  fill: #4285f4;
}

.google__red {
  fill: #ea4335;
}

.google__yellow {
  fill: #fbbc05;
}

.google__green {
  fill: #34a853;
}

.zoom {
  position: absolute;
  right: 42px;
  bottom: 62px;
  display: grid;
  border-radius: 6px;
  background: rgba(255, 255, 255, .7);
  box-shadow: 0 2px 6px rgba(0, 0, 0, .25);
}

.zoom__button {
  display: grid;
  place-items: center;
  width: 133px;
  height: 133px;
  padding: 0;
  border: 0;
  background: none;
}

.zoom__button + .zoom__button {
  border-top: 3px solid rgba(0, 0, 0, .05);
}

.zoom__button svg {
  width: 60px;
  height: 60px;
  fill: #666;
}

/* Storage choice */
.storage {
  margin: 62px 0 0;
  padding: 0;
  border: 0;
}

.storage__title {
  padding: 0;
  line-height: 70px;
}

.option {
  display: flex;
  align-items: center;
  gap: 50px;
  height: 168px;
  padding-left: 49px;
}

.option__text {
  padding-top: 4px;
}

.option__radio {
  display: grid;
  place-items: center;
  width: 70px;
  height: 70px;
  margin: 0;
  border: 7px solid #666;
  border-radius: 50%;
  appearance: none;
}

.option__radio:checked {
  border-color: #625b71;
}

.option__radio:checked::before {
  content: "";
  width: 36px;
  height: 36px;
  border-radius: 50%;
  background: #625b71;
}

.save {
  height: 168px;
  margin-top: 20px;
  border: 0;
  border-radius: 14px;
  background: #6750a4;
  box-shadow: 0 4px 10px rgba(0, 0, 0, .3);
}

/* Gesture bar */
.gesture {
  display: grid;
  flex: none;
  place-items: center;
  height: 84px;
  background: #000;
}

.gesture__bar {
  width: 378px;
  height: 14px;
  border-radius: 7px;
  background: #ececec;
}
```
